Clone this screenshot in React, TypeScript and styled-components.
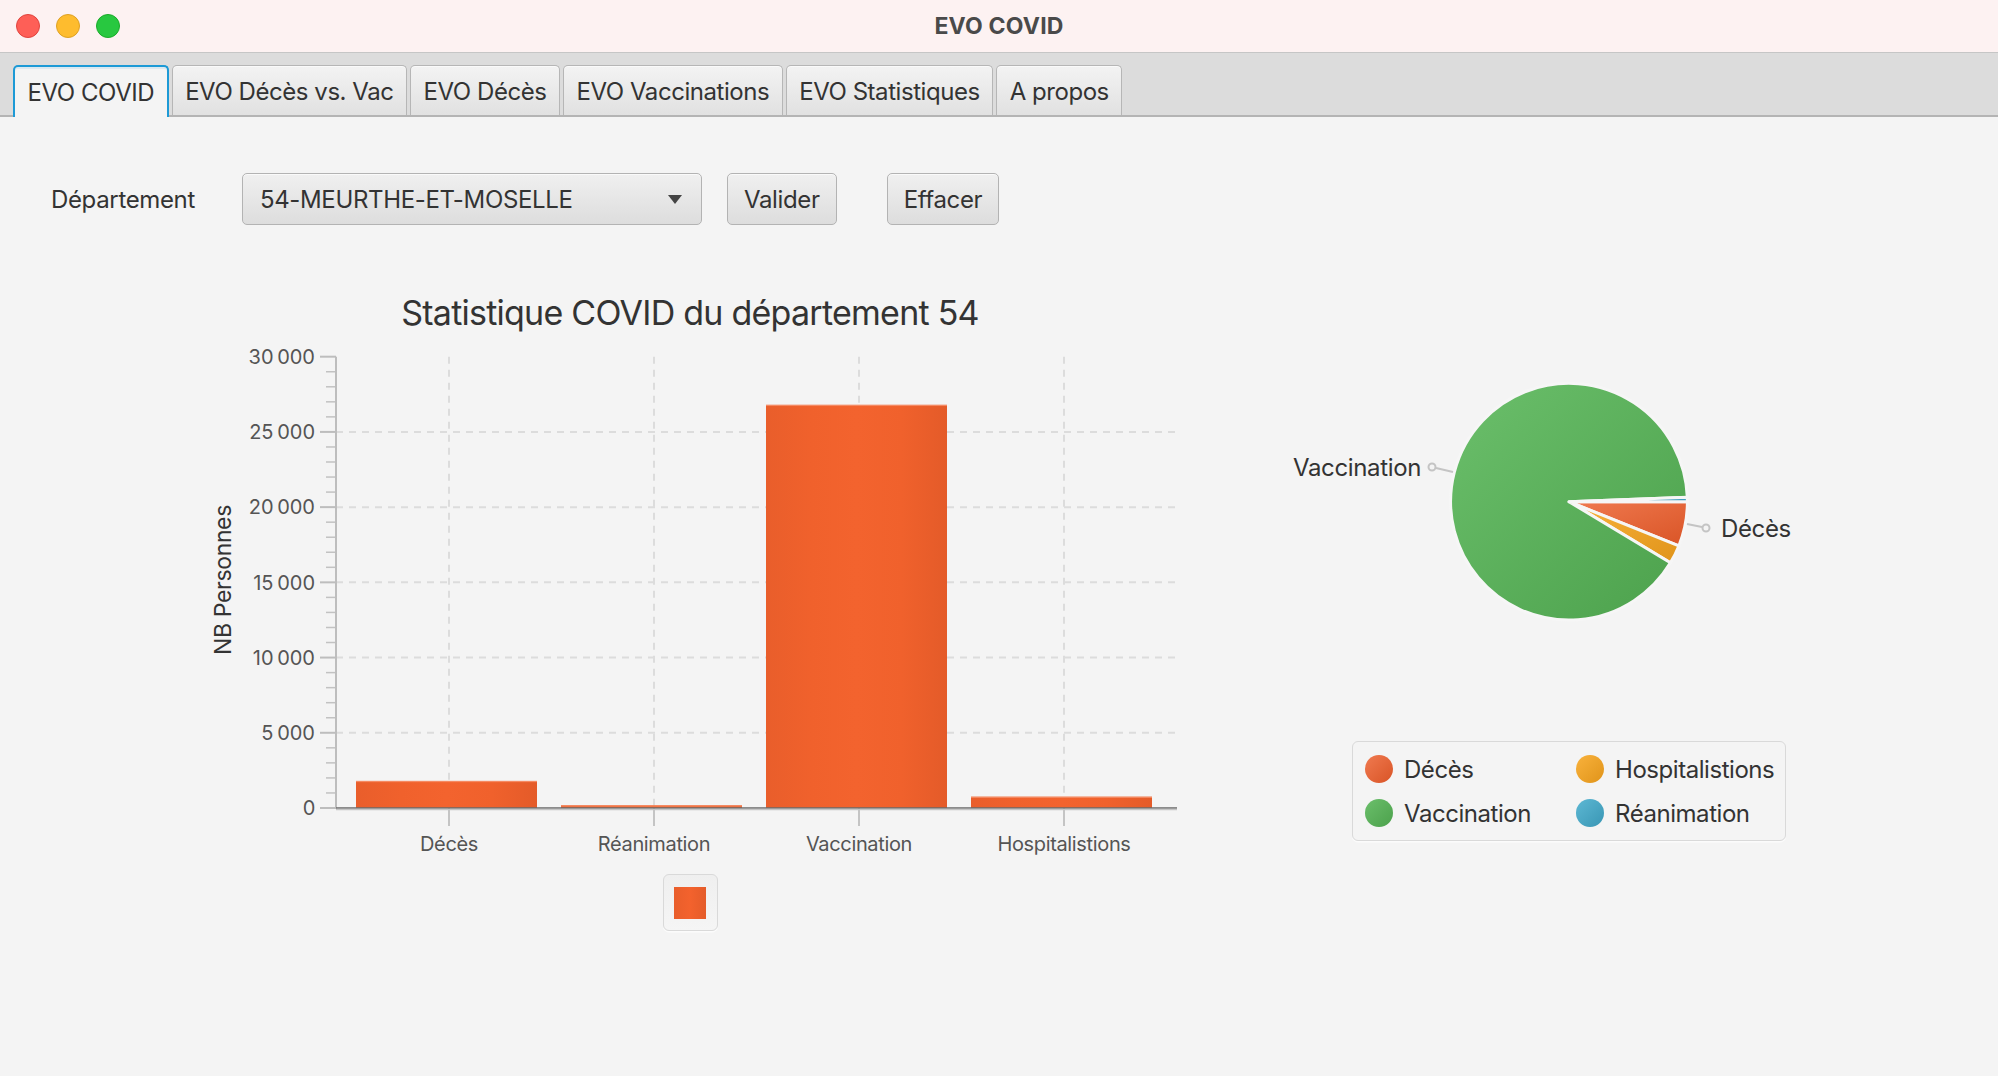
import React from 'react';
import styled, { createGlobalStyle } from 'styled-components';

const GlobalStyle = createGlobalStyle`
  html, body {
    margin: 0;
    padding: 0;
    background: #f4f4f4;
  }
  body {
    font-family: Inter, "Noto Sans", "Liberation Sans", sans-serif;
    color: #333;
    letter-spacing: -0.35px;
  }
`;

const Window = styled.div`
  width: 1998px;
  height: 1076px;
  display: flex;
  flex-direction: column;
  background: #f4f4f4;
  overflow: hidden;
`;

const TitleBar = styled.header`
  flex: none;
  height: 52px;
  display: grid;
  grid-template-columns: 1fr auto 1fr;
  align-items: center;
  background: #fdf2f2;
  border-bottom: 1px solid #c6c6c6;
`;

const Lights = styled.div`
  display: flex;
  gap: 16px;
  padding-left: 16px;
`;

const Light = styled.span<{ $color: string; $edge: string }>`
  width: 24px;
  height: 24px;
  border-radius: 50%;
  box-sizing: border-box;
  background: ${(p) => p.$color};
  border: 1px solid ${(p) => p.$edge};
`;

const WindowTitle = styled.div`
  font-size: 23px;
  font-weight: 700;
  color: #4a4a4a;
  letter-spacing: 0.2px;
`;

const TabBar = styled.nav`
  flex: none;
  height: 64px;
  box-sizing: border-box;
  display: flex;
  align-items: flex-end;
  gap: 3px;
  padding-left: 13px;
  background: #dcdcdc;
  border-bottom: 2px solid #b4b4b4;
`;

const Tab = styled.div<{ $active?: boolean }>`
  box-sizing: border-box;
  height: ${(p) => (p.$active ? '52px' : '50px')};
  margin-bottom: ${(p) => (p.$active ? '-2px' : '0')};
  padding: 1px 12.5px 0;
  display: flex;
  align-items: center;
  font-size: 24px;
  letter-spacing: -0.45px;
  color: #333;
  border-radius: 5px 5px 0 0;
  border: ${(p) => (p.$active ? '2px solid #1d9ad6' : '1.5px solid #b6b6b6')};
  border-bottom: none;
  background: ${(p) =>
    p.$active ? '#f4f4f4' : 'linear-gradient(to bottom, #f3f3f3, #e1e1e1)'};
  box-shadow: ${(p) => (p.$active ? 'inset 0 2px 0 #dbe9f0' : 'inset 0 1px 0 #fafafa')};
`;

const Content = styled.main`
  flex: 1;
  display: flex;
  flex-direction: column;
  padding: 56px 0 0 51px;
`;

const FormRow = styled.div`
  display: flex;
  align-items: center;
  height: 52px;
`;

const FieldLabel = styled.span`
  font-size: 24px;
  color: #333;
  margin-right: 47px;
`;

const ComboBox = styled.div`
  box-sizing: border-box;
  width: 460px;
  height: 52px;
  display: flex;
  align-items: center;
  justify-content: space-between;
  padding: 0 19px 0 17px;
  font-size: 24px;
  color: #333;
  border: 1.5px solid #b3b3b3;
  border-radius: 5px;
  background: linear-gradient(to bottom, #f0f0f0, #dddddd);
  box-shadow: inset 0 1px 0 #fafafa;
`;

const Arrow = styled.span`
  width: 0;
  height: 0;
  border-left: 7px solid transparent;
  border-right: 7px solid transparent;
  border-top: 9px solid #444;
`;

const Button = styled.button<{ $gap: number }>`
  box-sizing: border-box;
  height: 52px;
  margin-left: ${(p) => p.$gap}px;
  padding: 0 16px;
  font-family: inherit;
  font-size: 24px;
  letter-spacing: inherit;
  color: #333;
  border: 1.5px solid #b3b3b3;
  border-radius: 5px;
  background: linear-gradient(to bottom, #f0f0f0, #dddddd);
  box-shadow: inset 0 1px 0 #fafafa;
`;

const ChartsRow = styled.section`
  display: flex;
  align-items: flex-start;
  margin-top: 67px;
  padding-left: 139px;
`;

const BarPanel = styled.div`
  width: 1000px;
  display: flex;
  flex-direction: column;
  align-items: center;
`;

const ChartTitle = styled.h2`
  margin: 0;
  font-size: 34px;
  line-height: 41px;
  font-weight: 400;
  letter-spacing: -0.75px;
  color: #333;
`;

const ChartSvg = styled.svg`
  display: block;
  font-family: Inter, "Noto Sans", "Liberation Sans", sans-serif;
`;

const SeriesLegend = styled.div`
  box-sizing: border-box;
  margin-top: 11px;
  width: 55px;
  height: 57px;
  display: flex;
  align-items: center;
  justify-content: center;
  border: 1.5px solid #d9d9d9;
  border-radius: 6px;
  background: linear-gradient(to bottom, #efefef, #f5f5f5);
  box-shadow: 0 1.5px 0 #fbfbfb;
`;

const SeriesSwatch = styled.span`
  width: 32px;
  height: 32px;
  background: linear-gradient(to right, #e95e2b, #f3622d 50%, #e45c2a);
`;

const PiePanel = styled.div`
  width: 758px;
  display: flex;
  flex-direction: column;
  align-items: center;
`;

const PieLegend = styled.div`
  box-sizing: border-box;
  width: 434px;
  height: 100px;
  display: grid;
  grid-template-columns: 211px auto;
  grid-auto-rows: 44px;
  padding: 5px 0 0 12px;
  border: 1.5px solid #d9d9d9;
  border-radius: 6px;
  box-shadow: 0 1.5px 0 #fbfbfb;
`;

const LegendItem = styled.div`
  display: flex;
  align-items: center;
  gap: 11px;
  font-size: 24px;
  letter-spacing: -0.45px;
  color: #333;
`;

const LegendDot = styled.span<{ $light: string; $dark: string }>`
  width: 28px;
  height: 28px;
  border-radius: 50%;
  background: linear-gradient(135deg, ${(p) => p.$light}, ${(p) => p.$dark});
`;

type Slice = { name: string; value: number; light: string; dark: string };

const categories = [
  { name: 'Décès', value: 1800 },
  { name: 'Réanimation', value: 180 },
  { name: 'Vaccination', value: 26800 },
  { name: 'Hospitalistions', value: 750 },
];

const slices: Slice[] = [
  { name: 'Décès', value: 1800, light: '#f07a50', dark: '#d95426' },
  { name: 'Hospitalistions', value: 750, light: '#f9b23c', dark: '#e0941a' },
  { name: 'Vaccination', value: 26800, light: '#6bbf6b', dark: '#4ca14c' },
  { name: 'Réanimation', value: 180, light: '#5db8d4', dark: '#3996b4' },
];

const fmt = (n: number) => n.toLocaleString('fr-FR').replace(/\s/g, '\u202F');

const PLOT_TOP = 23.7;
const PLOT_BOTTOM = 475;
const AXIS_X = 146;
const PLOT_RIGHT = 987;
const yOf = (v: number) => PLOT_BOTTOM - (v / 30000) * (PLOT_BOTTOM - PLOT_TOP);
const centers = [259, 464, 669, 874];

const BarChart = () => {
  const majors = [0, 5000, 10000, 15000, 20000, 25000, 30000];
  const minors = Array.from({ length: 31 }, (_, i) => i * 1000).filter((v) => v % 5000 !== 0);
  return (
    <ChartSvg width={1000} height={530}>
      <defs>
        <linearGradient id="barFill" x1="0" y1="0" x2="1" y2="0">
          <stop offset="0" stopColor="#e95e2b" />
          <stop offset="0.25" stopColor="#f0612c" />
          <stop offset="0.5" stopColor="#f3632e" />
          <stop offset="0.75" stopColor="#f0612c" />
          <stop offset="1" stopColor="#e45b29" />
        </linearGradient>
      </defs>
      <text
        x={33}
        y={247}
        transform="rotate(-90 33 247)"
        textAnchor="middle"
        dominantBaseline="central"
        fontSize={23}
        fill="#333"
      >
        NB Personnes
      </text>
      {majors.slice(1, 6).map((v) => (
        <line key={'h' + v} x1={AXIS_X} x2={PLOT_RIGHT} y1={yOf(v)} y2={yOf(v)} stroke="#dcdcdc" strokeWidth={2} strokeDasharray="7 6" />
      ))}
      {centers.map((c) => (
        <line key={'v' + c} x1={c} x2={c} y1={PLOT_TOP} y2={PLOT_BOTTOM} stroke="#dcdcdc" strokeWidth={2} strokeDasharray="7 6" />
      ))}
      {minors.map((v) => (
        <line key={'m' + v} x1={136} x2={AXIS_X} y1={yOf(v)} y2={yOf(v)} stroke="#c2c2c2" strokeWidth={1.5} />
      ))}
      {majors.map((v) => (
        <g key={'t' + v}>
          <line x1={130} x2={AXIS_X} y1={yOf(v)} y2={yOf(v)} stroke="#bdbdbd" strokeWidth={2} />
          <text x={125} y={yOf(v) + 7.3} textAnchor="end" fontSize={20} fill="#555">
            {fmt(v)}
          </text>
        </g>
      ))}
      <line x1={AXIS_X} x2={AXIS_X} y1={PLOT_TOP} y2={PLOT_BOTTOM + 1} stroke="#bdbdbd" strokeWidth={2} />
      {categories.map((c, i) => {
        const top = yOf(c.value);
        return (
          <g key={c.name}>
            <rect x={centers[i] - 93} y={top} width={181} height={PLOT_BOTTOM - top} fill="url(#barFill)" />
            <rect x={centers[i] - 93} y={top} width={181} height={1.2} fill="#f58a62" />
            <line x1={centers[i]} x2={centers[i]} y1={PLOT_BOTTOM} y2={PLOT_BOTTOM + 18} stroke="#c4c4c4" strokeWidth={2} />
            <text x={centers[i]} y={518} textAnchor="middle" fontSize={20} fill="#555">
              {c.name}
            </text>
          </g>
        );
      })}
      <line x1={AXIS_X} x2={PLOT_RIGHT} y1={PLOT_BOTTOM} y2={PLOT_BOTTOM} stroke="#6a6a6a" strokeWidth={1.5} />
      <line x1={AXIS_X} x2={PLOT_RIGHT} y1={PLOT_BOTTOM + 1.5} y2={PLOT_BOTTOM + 1.5} stroke="#c4c4c4" strokeWidth={1.5} />
    </ChartSvg>
  );
};

const PIE_CX = 379;
const PIE_CY = 209.7;
const PIE_R = 118.4;

const pt = (deg: number, r = PIE_R) => {
  const a = (deg * Math.PI) / 180;
  return [PIE_CX + r * Math.cos(a), PIE_CY + r * Math.sin(a)];
};

const PieChart = () => {
  const total = slices.reduce((s, x) => s + x.value, 0);
  let start = 0;
  const arcs = slices.map((s) => {
    const sweep = (s.value / total) * 360;
    const [x1, y1] = pt(start);
    const [x2, y2] = pt(start + sweep);
    const d = `M ${PIE_CX} ${PIE_CY} L ${x1} ${y1} A ${PIE_R} ${PIE_R} 0 ${sweep > 180 ? 1 : 0} 1 ${x2} ${y2} Z`;
    start += sweep;
    return { ...s, d };
  });
  return (
    <ChartSvg width={758} height={449}>
      <defs>
        {slices.map((s, i) => (
          <linearGradient key={s.name} id={'pie' + i} x1="0" y1="0" x2="1" y2="1">
            <stop offset="0" stopColor={s.light} />
            <stop offset="1" stopColor={s.dark} />
          </linearGradient>
        ))}
      </defs>
      {arcs.map((a, i) => (
        <path key={a.name} d={a.d} fill={`url(#pie${i})`} stroke="#f6f6f6" strokeWidth={3} strokeLinejoin="round" />
      ))}
      <line x1={246} y1={176} x2={263} y2={180} stroke="#c4c4c4" strokeWidth={2} />
      <circle cx={242} cy={175} r={3.5} fill="none" stroke="#c4c4c4" strokeWidth={2} />
      <text x={231} y={184} textAnchor="end" fontSize={24} fill="#333">
        Vaccination
      </text>
      <line x1={497} y1={232} x2={512} y2={235} stroke="#c4c4c4" strokeWidth={2} />
      <circle cx={516} cy={236} r={3.5} fill="none" stroke="#c4c4c4" strokeWidth={2} />
      <text x={531} y={245} fontSize={24} fill="#333">
        Décès
      </text>
    </ChartSvg>
  );
};

const tabs = ['EVO COVID', 'EVO Décès vs. Vac', 'EVO Décès', 'EVO Vaccinations', 'EVO Statistiques', 'A propos'];

export default function App() {
  return (
    <>
      <GlobalStyle />
      <Window>
        <TitleBar>
          <Lights>
            <Light $color="#fe5f57" $edge="#e0443e" />
            <Light $color="#febc2e" $edge="#dea123" />
            <Light $color="#28c840" $edge="#1aab29" />
          </Lights>
          <WindowTitle>EVO COVID</WindowTitle>
          <span />
        </TitleBar>
        <TabBar>
          {tabs.map((t, i) => (
            <Tab key={t} $active={i === 0}>
              {t}
            </Tab>
          ))}
        </TabBar>
        <Content>
          <FormRow>
            <FieldLabel>Département</FieldLabel>
            <ComboBox>
              <span>54-MEURTHE-ET-MOSELLE</span>
              <Arrow />
            </ComboBox>
            <Button $gap={25}>Valider</Button>
            <Button $gap={50}>Effacer</Button>
          </FormRow>
          <ChartsRow>
            <BarPanel>
              <ChartTitle>Statistique COVID du département 54</ChartTitle>
              <BarChart />
              <SeriesLegend>
                <SeriesSwatch />
              </SeriesLegend>
            </BarPanel>
            <PiePanel>
              <PieChart />
              <PieLegend>
                {slices.map((s) => (
                  <LegendItem key={s.name}>
                    <LegendDot $light={s.light} $dark={s.dark} />
                    {s.name}
                  </LegendItem>
                ))}
              </PieLegend>
            </PiePanel>
          </ChartsRow>
        </Content>
      </Window>
    </>
  );
}
